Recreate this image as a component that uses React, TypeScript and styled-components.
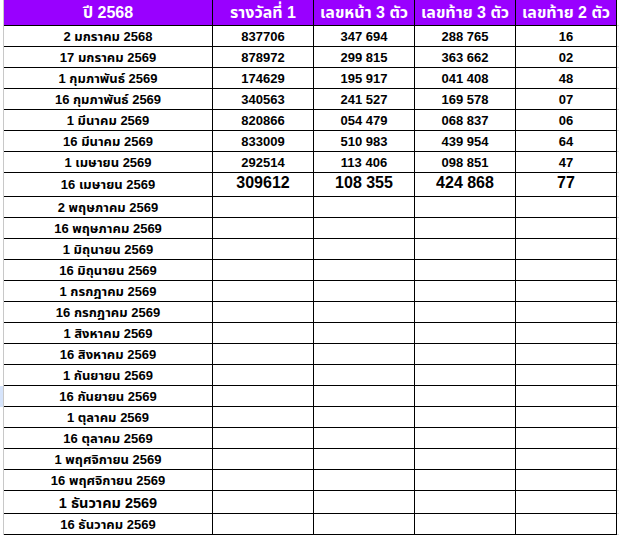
import styled, { createGlobalStyle } from "styled-components";

type Row = {
  date: string;
  first?: string;
  front?: string;
  back3?: string;
  back2?: string;
  big?: boolean;
  tall?: boolean;
  selected?: boolean;
};

const rows: Row[] = [
  { date: "2 มกราคม 2568", first: "837706", front: "347 694", back3: "288 765", back2: "16" },
  { date: "17 มกราคม 2569", first: "878972", front: "299 815", back3: "363 662", back2: "02" },
  { date: "1 กุมภาพันธ์ 2569", first: "174629", front: "195 917", back3: "041 408", back2: "48" },
  { date: "16 กุมภาพันธ์ 2569", first: "340563", front: "241 527", back3: "169 578", back2: "07" },
  { date: "1 มีนาคม 2569", first: "820866", front: "054 479", back3: "068 837", back2: "06" },
  { date: "16 มีนาคม 2569", first: "833009", front: "510 983", back3: "439 954", back2: "64" },
  { date: "1 เมษายน 2569", first: "292514", front: "113 406", back3: "098 851", back2: "47" },
  { date: "16 เมษายน 2569", first: "309612", front: "108 355", back3: "424 868", back2: "77", big: true },
  { date: "2 พฤษภาคม 2569" },
  { date: "16 พฤษภาคม 2569" },
  { date: "1 มิถุนายน 2569" },
  { date: "16 มิถุนายน 2569" },
  { date: "1 กรกฎาคม 2569" },
  { date: "16 กรกฎาคม 2569" },
  { date: "1 สิงหาคม 2569" },
  { date: "16 สิงหาคม 2569" },
  { date: "1 กันยายน 2569" },
  { date: "16 กันยายน 2569", selected: true },
  { date: "1 ตุลาคม 2569" },
  { date: "16 ตุลาคม 2569" },
  { date: "1 พฤศจิกายน 2569" },
  { date: "16 พฤศจิกายน 2569" },
  { date: "1 ธันวาคม 2569", tall: true },
  { date: "16 ธันวาคม 2569" },
];

const headers = ["ปี 2568", "รางวัลที่ 1", "เลขหน้า 3 ตัว", "เลขท้าย 3 ตัว", "เลขท้าย 2 ตัว"];
const colWidths = [4, 209, 101, 101, 101, 101, 2];

export default function App() {
  return (
    <>
      <GlobalStyle />
      <Sheet>
        <colgroup>
          {colWidths.map((w, i) => (
            <Col key={i} $width={w} />
          ))}
        </colgroup>
        <thead>
          <HeadRow>
            <RowMark />
            {headers.map((h) => (
              <HeadCell key={h}>{h}</HeadCell>
            ))}
            <Tail />
          </HeadRow>
        </thead>
        <tbody>
          {rows.map((r) => (
            <BodyRow key={r.date} $height={r.big ? 24 : r.tall ? 23 : 21}>
              <RowMark $selected={r.selected} />
              <DateCell $tall={r.tall}>{r.date}</DateCell>
              <NumCell $big={r.big}>{r.first}</NumCell>
              <NumCell $big={r.big}>{r.front}</NumCell>
              <NumCell $big={r.big}>{r.back3}</NumCell>
              <NumCell $big={r.big}>{r.back2}</NumCell>
              <Tail />
            </BodyRow>
          ))}
        </tbody>
      </Sheet>
    </>
  );
}

const GlobalStyle = createGlobalStyle`
  html, body {
    margin: 0;
    padding: 0;
    background: #ffffff;
    overflow: hidden;
  }
  body {
    font-family: Tahoma, "Liberation Sans", "Noto Sans Thai", "Noto Sans", sans-serif;
    color: #000000;
  }
`;

const Sheet = styled.table`
  border-collapse: separate;
  border-spacing: 0;
  table-layout: fixed;
  width: 619px;
`;

const Col = styled.col<{ $width: number }>`
  width: ${({ $width }) => $width}px;
`;

const HeadRow = styled.tr`
  height: 26px;
`;

const BodyRow = styled.tr<{ $height: number }>`
  height: ${({ $height }) => $height}px;
`;

const Cell = styled.td`
  padding: 0;
  box-sizing: border-box;
  line-height: 14px;
  vertical-align: middle;
  text-align: center;
  white-space: nowrap;
  overflow: hidden;
  font-weight: 700;
`;

const RowMark = styled(Cell)<{ $selected?: boolean }>`
  border-right: 1px solid #c8c8c8;
  background: ${({ $selected }) => ($selected ? "#d6e4fb" : "#ffffff")};
`;

const Tail = styled(Cell)`
  border-bottom: 1px solid #dadada;
`;

const HeadCell = styled.th`
  padding: 0;
  line-height: 16px;
  background: #9900ff;
  color: #ffffff;
  font-size: 16px;
  font-weight: 700;
  text-align: center;
  vertical-align: middle;
  white-space: nowrap;
  overflow: hidden;
  border-bottom: 1px solid #000000;
  border-right: 1px solid #000000;
`;

const DateCell = styled(Cell)<{ $tall?: boolean }>`
  padding-top: 1px;
  font-size: ${({ $tall }) => ($tall ? "14.5px" : "13px")};
  border-bottom: 1px solid #000000;
  border-right: 1px solid #000000;
`;

const NumCell = styled(Cell)<{ $big?: boolean }>`
  padding-top: ${({ $big }) => ($big ? "0" : "1px")};
  padding-bottom: ${({ $big }) => ($big ? "3px" : "0")};
  font-family: "Liberation Sans", Arial, sans-serif;
  font-size: ${({ $big }) => ($big ? "16px" : "13px")};
  border-bottom: 1px solid #000000;
  border-right: 1px solid #000000;
`;
